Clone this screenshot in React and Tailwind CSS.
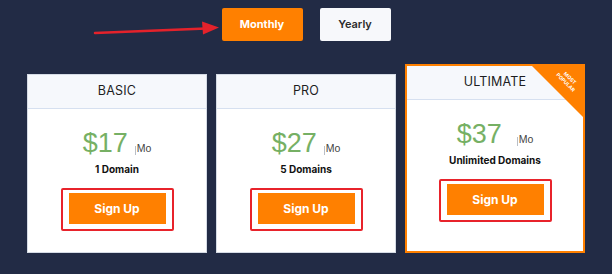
const plans = [
    { name: 'BASIC', price: '$17', note: '1 Domain', gap: 'ml-[7px]' },
    { name: 'PRO', price: '$27', note: '5 Domains', gap: 'ml-[7px]' },
    { name: 'ULTIMATE', price: '$37', note: 'Unlimited Domains', gap: 'ml-[15px]', popular: true },
];

function PlanCard({ plan }) {
    return (
        <div
            className={
                'relative w-[180px] flex flex-col bg-white overflow-hidden ' +
                (plan.popular ? 'h-[189px] border-2 border-[#ff8000]' : 'h-[179px] border border-[#d5dbe5]')
            }
        >
            <div className="h-[34px] flex items-center justify-center bg-[#f6f8fc] border-b border-[#d6e0f0] text-[12.5px] text-[#1d1d1f] tracking-[0.2px]">
                {plan.name}
            </div>

            {plan.popular && (
                <div className="absolute top-0 right-0 w-[51px] h-[51px] bg-[#ff8000] [clip-path:polygon(0_0,100%_0,100%_100%)]">
                    <div className="absolute top-[8px] right-[2px] w-[26px] rotate-45 text-center text-white font-bold text-[5px] leading-[6px]">
                        MOST POPULAR
                    </div>
                </div>
            )}

            <div className="mt-[21px] h-[27px] flex items-baseline justify-center font-['Liberation_Sans',Arial,sans-serif]">
                <span className="text-[27px] leading-[27px] text-[#76b064]">
                    {plan.price}
                </span>
                <span className={plan.gap + ' relative top-[3px] inline-block h-[9px] border-l border-[#b9bec6]'} />
                <span className="ml-[1px] text-[10.5px] leading-none text-[#444]">
                    Mo
                </span>
            </div>

            <div className="mt-[6px] text-center text-[10px] leading-[12px] font-bold text-[#111]">
                {plan.note}
            </div>

            <div className="mt-[13px] mx-auto border-2 border-[#e8232b] rounded-[2px] pt-[3px] pb-[5px] px-[6px]">
                <button className="w-[97px] h-[31px] bg-[#ff8000] text-white font-bold text-[12px]">
                    Sign Up
                </button>
            </div>
        </div>
    );
}

export default function App() {
    return (
        <div className="relative w-[612px] h-[274px] bg-[#222b45] font-['Inter',sans-serif] flex flex-col items-center">
            <div className="mt-[8px] flex gap-[17px]">
                <button className="w-[81px] h-[33px] rounded-[2px] bg-[#ff8000] text-white font-bold text-[11px]">
                    Monthly
                </button>
                <button className="w-[71px] h-[33px] rounded-[2px] bg-[#f7f8fb] text-[#2b2b2b] font-semibold text-[11px]">
                    Yearly
                </button>
            </div>

            <div className="mt-[23px] flex items-end gap-[9px]">
                {plans.map((p) => (
                    <PlanCard key={p.name} plan={p} />
                ))}
            </div>

            {/* annotation arrow */}
            <svg className="absolute left-0 top-0" width="612" height="60" viewBox="0 0 612 60">
                <line x1="95" y1="33" x2="206" y2="28.5" stroke="#e4222b" strokeWidth="2.5" strokeLinecap="round" />
                <polygon points="219,27.5 202,21.5 203,34.5" fill="#e4222b" />
            </svg>
        </div>
    );
}
